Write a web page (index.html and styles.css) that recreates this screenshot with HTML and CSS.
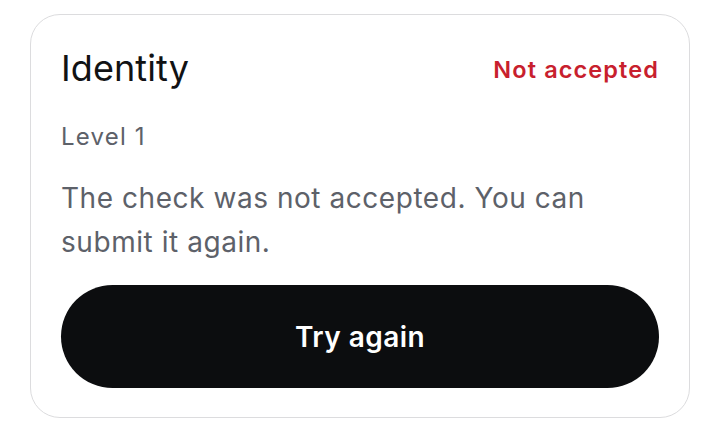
FILE: index.html
```html
<!DOCTYPE html>
<html lang="en">
<head>
<meta charset="utf-8">
<title>Identity</title>
<link rel="stylesheet" href="styles.css">
</head>
<body>
<div class="card">
  <div class="card-header">
    <h1 class="title">Identity</h1>
    <span class="status">Not accepted</span>
  </div>
  <div class="level">Level 1</div>
  <p class="message">The check was not accepted. You can submit it again.</p>
  <button class="btn" type="button">Try again</button>
</div>
</body>
</html>
```
FILE: styles.css
```css
html, body {
  margin: 0;
  padding: 0;
  background: #ffffff;
}
body {
  font-family: Inter, "Noto Sans", sans-serif;
  padding: 14px 30px 0 30px;
}
.card {
  box-sizing: border-box;
  width: 660px;
  height: 404px;
  border: 1.5px solid #dcdcde;
  border-radius: 30px;
  padding: 31px 30px 28px 30px;
  display: flex;
  flex-direction: column;
}
.card-header {
  display: flex;
  align-items: center;
  justify-content: space-between;
}
.title {
  margin: 0;
  font-size: 36px;
  line-height: 44px;
  font-weight: 400;
  color: #111214;
  letter-spacing: 0.1px;
}
.status {
  font-size: 23.5px;
  font-weight: 600;
  color: #c81f2e;
  margin-top: 2px;
  letter-spacing: 1.1px;
}
.level {
  margin-top: 31px;
  font-size: 24px;
  line-height: 32px;
  color: #5d6169;
  letter-spacing: 1.2px;
}
.message {
  margin: 23px 0 0 0;
  font-size: 28px;
  line-height: 44px;
  color: #5d6169;
  letter-spacing: 0.55px;
}
.btn {
  margin-top: 21px;
  height: 103px;
  border: none;
  border-radius: 52px;
  background: #0c0d0f;
  color: #ffffff;
  font-family: Inter, "Noto Sans", sans-serif;
  font-size: 28px;
  font-weight: 600;
  letter-spacing: 0.45px;
}
```
